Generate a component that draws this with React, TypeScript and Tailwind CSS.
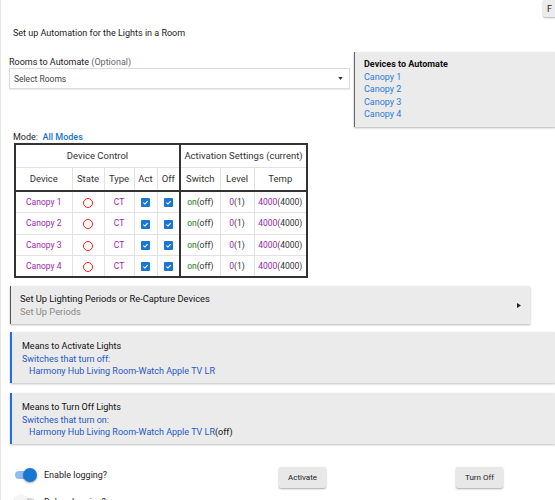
import React from 'react';

const canopies = ['Canopy 1', 'Canopy 2', 'Canopy 3', 'Canopy 4'];

const Check = () => (
  <span className="inline-flex h-[9px] w-[9px] items-center justify-center rounded-[1px] bg-[#1976d2] align-middle">
    <svg viewBox="0 0 10 10" className="h-[7px] w-[7px]">
      <path d="M2 5.2 L4.2 7.2 L8 3" fill="none" stroke="#fff" strokeWidth="1.6" />
    </svg>
  </span>
);

const Ring = () => (
  <span className="inline-block h-[10px] w-[10px] rounded-full border-[1.5px] border-[#ff1a1a] align-middle" />
);

const Toggle = ({ on }: { on: boolean }) => (
  <span className="relative inline-block h-[14px] w-[21px]">
    <span className={`absolute left-0 top-[3px] h-[8px] w-[20px] rounded-full ${on ? 'bg-[#8fbdf0]' : 'bg-[#d6d6d6]'}`} />
    <span
      className={`absolute top-0 h-[14px] w-[14px] rounded-full shadow-[0_1px_2px_rgba(0,0,0,0.35)] ${on ? 'left-[8px] bg-[#1976d2]' : 'left-[-1px] bg-[#f5f5f5]'}`}
    />
  </span>
);

const MeansBox = ({ title, label, device, suffix }: { title: string; label: string; device: string; suffix?: string }) => (
  <div className="ml-[9px] h-[51px] border-l-2 border-[#1e6fe0] bg-[#ebebeb] pl-[10px] pt-[8px] leading-[12.5px] shadow-[0_1px_2px_rgba(0,0,0,0.25)]">
    <div className="text-[#111]">{title}</div>
    <div className="text-[#2458c8]">{label}</div>
    <div className="pl-[7px]">
      <span className="text-[#2458c8]">{device}</span>
      {suffix && <span className="text-[#111]">{suffix}</span>}
    </div>
  </div>
);

export default function App() {
  const td = 'border border-[#e2e2e2] text-center h-[21.5px] p-0';
  const th = 'border border-[#e2e2e2] text-center font-normal p-0';
  return (
    <div className="h-[500px] w-[555px] overflow-hidden border-l border-[#e6e6e6] bg-white font-['Roboto',sans-serif] text-[9px] leading-[12px] text-[#222]">
      <div className="flex h-[17px] justify-end">
        <button className="-mr-[30px] h-[17px] w-[42px] rounded-[2px] bg-[#ececec] pl-[4px] text-left text-[9px] text-[#222] shadow-[0_1px_2px_rgba(0,0,0,0.3)]">
          F
        </button>
      </div>

      <div className="mt-[10px] pl-[12px] leading-[12px] text-[#1a1a1a]">Set up Automation for the Lights in a Room</div>

      <div className="mt-[13px] flex items-start pl-[8px]">
        <div className="w-[341px] pt-[4px]">
          <div className="leading-[12px]">
            <span className="text-[#1a1a1a]">Rooms to Automate </span>
            <span className="text-[#666]">(Optional)</span>
          </div>
          <div className="flex h-[21px] items-center justify-between border border-[#dcdcdc] bg-white pl-[4px] pr-[6px] shadow-[0_1px_1px_rgba(0,0,0,0.08)]">
            <span className="text-[8.5px] text-[#444]">Select Rooms</span>
            <svg viewBox="0 0 6 4" className="h-[3px] w-[5px]">
              <path d="M0 0 L6 0 L3 4 Z" fill="#333" />
            </svg>
          </div>
        </div>
        <div className="ml-[4px] h-[75px] flex-1 border-l border-[#666] bg-[#ebebeb] pl-[9px] pt-[6px] leading-[12.5px] shadow-[0_1px_2px_rgba(0,0,0,0.3)]">
          <div className="font-bold text-[#111]">Devices to Automate</div>
          {canopies.map((c) => (
            <div key={c} className="text-[#2a7bdc]">{c}</div>
          ))}
        </div>
      </div>

      <div className="mt-[4px] pl-[12px] leading-[12px] text-[#222]">
        Mode:&nbsp;&nbsp;<span className="font-medium text-[#1a73d9]">All Modes</span>
      </div>

      <table className="ml-[13px] w-[292px] table-fixed border-collapse border-2 border-[#333] text-[9.5px] text-[#333]">
        <colgroup>
          <col className="w-[57px]" />
          <col className="w-[32px]" />
          <col className="w-[30px]" />
          <col className="w-[23px]" />
          <col className="w-[23px]" />
          <col className="w-[40px]" />
          <col className="w-[34px]" />
          <col className="w-[53px]" />
        </colgroup>
        <thead>
          <tr className="h-[23px]">
            <th colSpan={5} className={`${th} border-r-2 border-r-[#333]`}>Device Control</th>
            <th colSpan={3} className={th}>Activation Settings (current)</th>
          </tr>
          <tr className="h-[24px] border-b-2 border-b-[#333]">
            <th className={th}>Device</th>
            <th className={th}>State</th>
            <th className={th}>Type</th>
            <th className={th}>Act</th>
            <th className={`${th} border-r-2 border-r-[#333]`}>Off</th>
            <th className={th}>Switch</th>
            <th className={th}>Level</th>
            <th className={th}>Temp</th>
          </tr>
        </thead>
        <tbody className="text-[8.5px]">
          {canopies.map((c) => (
            <tr key={c}>
              <td className={`${td} text-[#9b27af]`}>{c}</td>
              <td className={td}><Ring /></td>
              <td className={`${td} text-[#9b27af]`}>CT</td>
              <td className={td}><Check /></td>
              <td className={`${td} border-r-2 border-r-[#333]`}><Check /></td>
              <td className={td}>
                <span className="text-[#148014]">on</span>(off)
              </td>
              <td className={td}>
                <span className="text-[#9b27af]">0</span>(1)
              </td>
              <td className={td}>
                <span className="text-[#9b27af]">4000</span>(4000)
              </td>
            </tr>
          ))}
        </tbody>
      </table>

      <div className="ml-[9px] mr-[25px] mt-[8px] flex h-[38px] items-center justify-between border-l border-[#555] bg-[#ebebeb] pl-[9px] pr-[9px] text-[9.3px] leading-[13px] shadow-[0_1px_2px_rgba(0,0,0,0.3)]">
        <div>
          <div className="text-[#111]">Set Up Lighting Periods or Re-Capture Devices</div>
          <div className="text-[#888]">Set Up Periods</div>
        </div>
        <svg viewBox="0 0 4 5" className="h-[5px] w-[4px]">
          <path d="M0 0 L4 2.5 L0 5 Z" fill="#222" />
        </svg>
      </div>

      <div className="mt-[8px]">
        <MeansBox
          title="Means to Activate Lights"
          label="Switches that turn off:"
          device="Harmony Hub Living Room-Watch Apple TV LR"
        />
      </div>
      <div className="mt-[10px]">
        <MeansBox
          title="Means to Turn Off Lights"
          label="Switches that turn on:"
          device="Harmony Hub Living Room-Watch Apple TV LR"
          suffix="(off)"
        />
      </div>

      <div className="mt-[23px] flex items-start pl-[14px]">
        <div className="w-[264px]">
          <div className="mt-[1px] flex h-[14px] items-center">
            <Toggle on />
            <span className="ml-[8px] text-[#222]">Enable logging?</span>
          </div>
          <div className="mt-[13px] flex h-[14px] items-center">
            <Toggle on={false} />
            <span className="ml-[8px] text-[#222]">Debug logging?</span>
          </div>
        </div>
        <button className="h-[21px] w-[47px] rounded-[2px] bg-[#e8e8e8] text-[8px] text-[#222] shadow-[0_1px_2px_rgba(0,0,0,0.35)]">
          Activate
        </button>
        <div className="w-[130px]" />
        <button className="h-[21px] w-[47px] rounded-[2px] bg-[#e8e8e8] text-[8px] text-[#222] shadow-[0_1px_2px_rgba(0,0,0,0.35)]">
          Turn Off
        </button>
      </div>
    </div>
  );
}
